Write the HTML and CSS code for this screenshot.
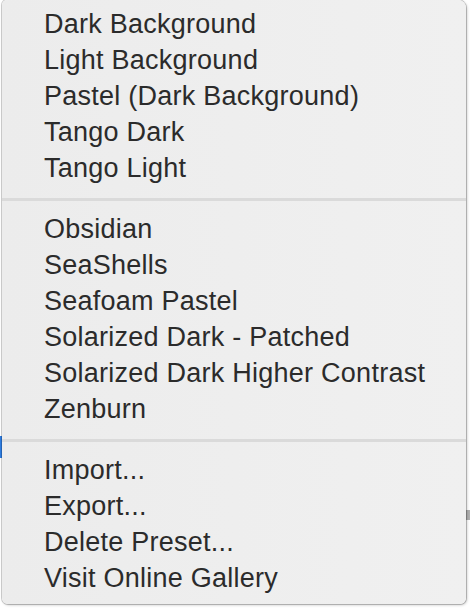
FILE: index.html
```html
<!DOCTYPE html>
<html>
<head>
<meta charset="utf-8">
<link rel="stylesheet" href="styles.css">
</head>
<body>
<div class="backdrop">
  <span class="mark mark-blue"></span>
  <span class="mark mark-gray"></span>
  <div class="menu">
    <ul class="group">
      <li class="item">Dark Background</li>
      <li class="item">Light Background</li>
      <li class="item">Pastel (Dark Background)</li>
      <li class="item">Tango Dark</li>
      <li class="item">Tango Light</li>
    </ul>
    <div class="sep"></div>
    <ul class="group">
      <li class="item">Obsidian</li>
      <li class="item">SeaShells</li>
      <li class="item">Seafoam Pastel</li>
      <li class="item">Solarized Dark - Patched</li>
      <li class="item">Solarized Dark Higher Contrast</li>
      <li class="item">Zenburn</li>
    </ul>
    <div class="sep"></div>
    <ul class="group">
      <li class="item">Import...</li>
      <li class="item">Export...</li>
      <li class="item">Delete Preset...</li>
      <li class="item">Visit Online Gallery</li>
    </ul>
  </div>
</div>
</body>
</html>
```
FILE: styles.css
```css
html, body {
  margin: 0;
  padding: 0;
  background: #ffffff;
}
.backdrop {
  position: relative;
  width: 470px;
  height: 608px;
  overflow: hidden;
}
.mark {
  position: absolute;
  display: block;
}
.mark-blue {
  left: 0;
  top: 436px;
  width: 3px;
  height: 22px;
  background: #2f7de1;
}
.mark-gray {
  left: 466px;
  top: 510px;
  width: 4px;
  height: 10px;
  background: #b0b0b0;
}
.menu {
  position: relative;
  margin-left: 2px;
  width: 464px;
  height: 604px;
  box-sizing: border-box;
  padding: 6px 0 8px;
  background: linear-gradient(to right, #ececec, #f0f0f0);
  border-radius: 0 0 6px 6px;
  border-top-left-radius: 5px;
  border-top-right-radius: 8px;
  box-shadow: 0 0 0 1px rgba(0,0,0,0.18), 1px 1px 3px rgba(0,0,0,0.25);
  font-family: "Liberation Sans", Arial, sans-serif;
  font-size: 27px;
  letter-spacing: 0.25px;
  color: #2b2b2b;
}
.group {
  list-style: none;
  margin: 0;
  padding: 0;
}
.item {
  height: 36px;
  line-height: 36px;
  padding-left: 42px;
  white-space: nowrap;
}
.sep {
  height: 3px;
  margin: 12px 0 10px;
  background: #dadada;
}
```
